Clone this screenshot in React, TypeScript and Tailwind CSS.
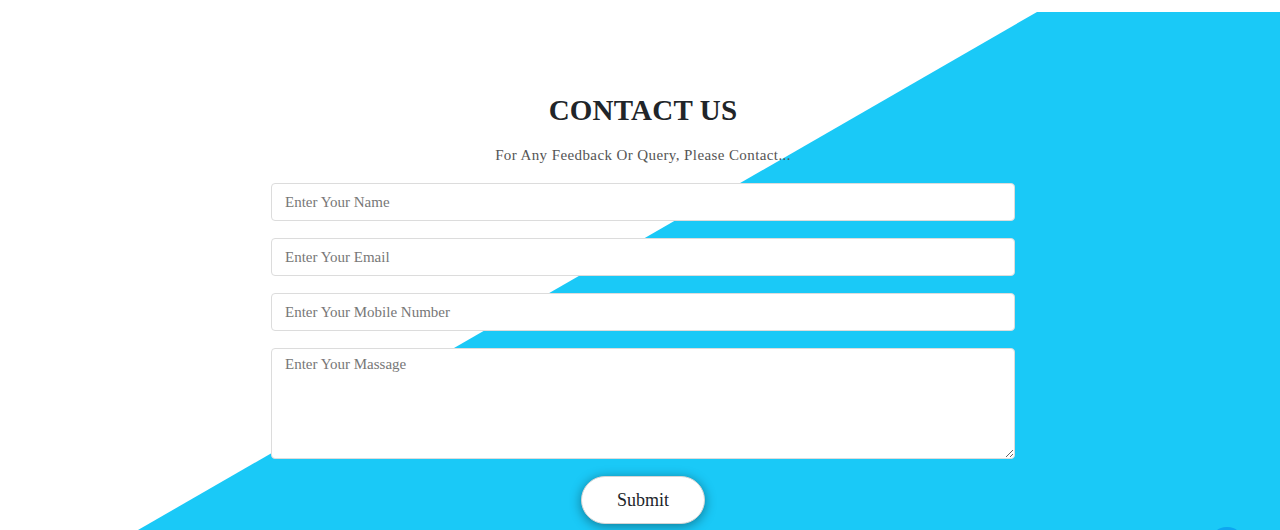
import React from "react";

export default function App() {
  const serif = { fontFamily: '"Liberation Serif", serif' };
  return (
    <div className="relative w-[1280px] h-[530px] overflow-hidden bg-white" style={serif}>
      <svg className="absolute inset-0" width="1280" height="530" viewBox="0 0 1280 530">
        <polygon points="1037,12 1280,12 1280,530 138,530" fill="#1ac9f7" />
      </svg>
      <div className="absolute left-[1209px] top-[527px] w-[36px] h-[36px] rounded-full bg-[#0ea5f0]" />
      <div className="relative flex flex-col items-center pt-[92px] pl-[6px]">
        <h1 className="text-[29px] leading-[36px] font-bold text-[#212529] tracking-[0.2px]">
          CONTACT US
        </h1>
        <p className="mt-[17px] text-[15px] leading-[20px] text-[#555] tracking-[0.4px]">
          For Any Feedback Or Query, Please Contact...
        </p>
        <form className="mt-[18px] w-[744px] flex flex-col gap-[17px]">
          {["Enter Your Name", "Enter Your Email", "Enter Your Mobile Number"].map((p) => (
            <input
              key={p}
              placeholder={p}
              className="h-[38px] w-full rounded-[4px] border border-[#dcdcdc] bg-white px-[13px] text-[15px] placeholder:text-[#777] outline-none font-['Liberation_Serif',serif]"
            />
          ))}
          <textarea
            placeholder="Enter Your Massage"
            className="h-[111px] w-full rounded-[4px] border border-[#dcdcdc] bg-white px-[13px] py-[4px] text-[15px] placeholder:text-[#777] outline-none font-['Liberation_Serif',serif]"
          />
        </form>
        <button className="mt-[17px] w-[124px] h-[48px] rounded-full bg-white border border-[#d5d5d5] text-[18px] text-[#212529] shadow-[0_2px_12px_rgba(0,0,0,0.4)] font-['Liberation_Serif',serif]">
          Submit
        </button>
      </div>
    </div>
  );
}
